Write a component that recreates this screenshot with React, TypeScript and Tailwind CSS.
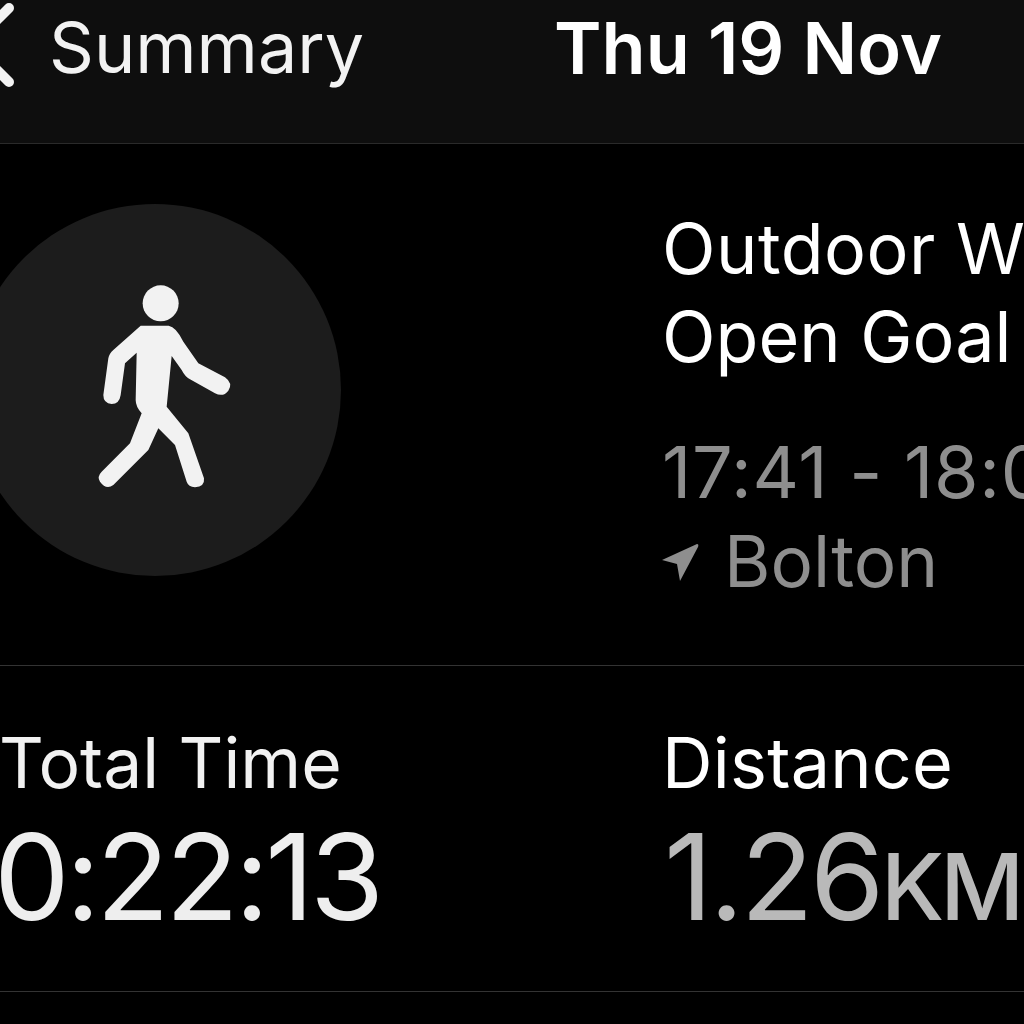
export default function App() {
  return (
    <div className="w-[1024px] h-[1024px] overflow-hidden bg-black font-['Inter',sans-serif]">
      <header className="h-[144px] bg-[#0e0e0e] border-b border-[#2a2a2a] flex items-start">
        <svg width="16" height="92" viewBox="0 0 16 92" className="shrink-0" fill="none">
          <path d="M9 8 L-28 45 L9 82" stroke="#f2f2f2" strokeWidth="10" strokeLinecap="round" strokeLinejoin="round" />
        </svg>
        <span className="ml-[33px] text-[70px] leading-[96px] text-[#f2f2f2]">Summary</span>
        <span className="ml-[190px] text-[72px] leading-[96px] font-semibold text-white whitespace-nowrap">Thu 19 Nov</span>
      </header>
      <section className="h-[522px] border-b border-[#333333] grid grid-cols-[662px_1fr]">
        <div className="pt-[60px]">
          <div className="w-[372px] h-[372px] -ml-[31px] rounded-full bg-[#1c1c1c] flex items-center justify-center">
            <svg width="180" height="230" viewBox="0 0 540 690" className="ml-[10px] mb-[10px]" fill="#f2f2f2">
              <circle cx="272" cy="100" r="54" />
              <path d="M212 167 L296 167 Q318 170 340 215 L385 280 L465 322 Q490 340 475 362 Q460 382 435 370 L360 328 Q345 320 335 300 L305 258 L290 410 L355 490 L402 625 Q405 650 375 652 Q355 650 350 635 L315 525 L265 475 L235 540 L130 645 Q108 660 90 635 Q80 620 95 605 L180 520 L215 430 Q197 410 197 390 L200 248 L165 280 L152 375 Q148 402 125 402 Q100 400 100 375 L115 265 Q118 250 130 240 Z" />
            </svg>
          </div>
        </div>
        <div className="pt-[61px] whitespace-nowrap">
          <div className="text-[70px] leading-[88px] tracking-[0.5px] text-white">Outdoor Walk</div>
          <div className="text-[70px] leading-[88px] text-white">Open Goal</div>
          <div className="mt-[46px] text-[72px] leading-[90px] tracking-[0.7px] text-[#8e8e8e]">17:41 - 18:03</div>
          <div className="flex items-center text-[71px] leading-[88px] text-[#8e8e8e]">
            <svg width="38" height="40" viewBox="0 0 38 40" fill="#8e8e8e" className="shrink-0">
              <path d="M0 19 L35 3 Q37 3 36 6 L18 40 L15 23 Z" />
            </svg>
            <span className="ml-[24px]">Bolton</span>
          </div>
        </div>
      </section>
      <section className="h-[326px] border-b border-[#333333] grid grid-cols-[662px_1fr] whitespace-nowrap">
        <div className="pt-[53px] -ml-[1px]">
          <div className="text-[69.5px] leading-[88px] text-[#f2f2f2]">Total Time</div>
          <div className="mt-[10px] -ml-[5px] text-[120px] leading-[120px] text-[#eeeeee] tracking-[-4px]">0:22:13</div>
        </div>
        <div className="pt-[53px]">
          <div className="text-[70px] leading-[88px] tracking-[0.25px] text-white">Distance</div>
          <div className="mt-[10px] pl-[2px] text-[120px] leading-[120px] text-[#b9b9b9] tracking-[-3.5px]">
            1.26<span className="text-[92px] font-medium tracking-[-4px]">KM</span>
          </div>
        </div>
      </section>
    </div>
  );
}
